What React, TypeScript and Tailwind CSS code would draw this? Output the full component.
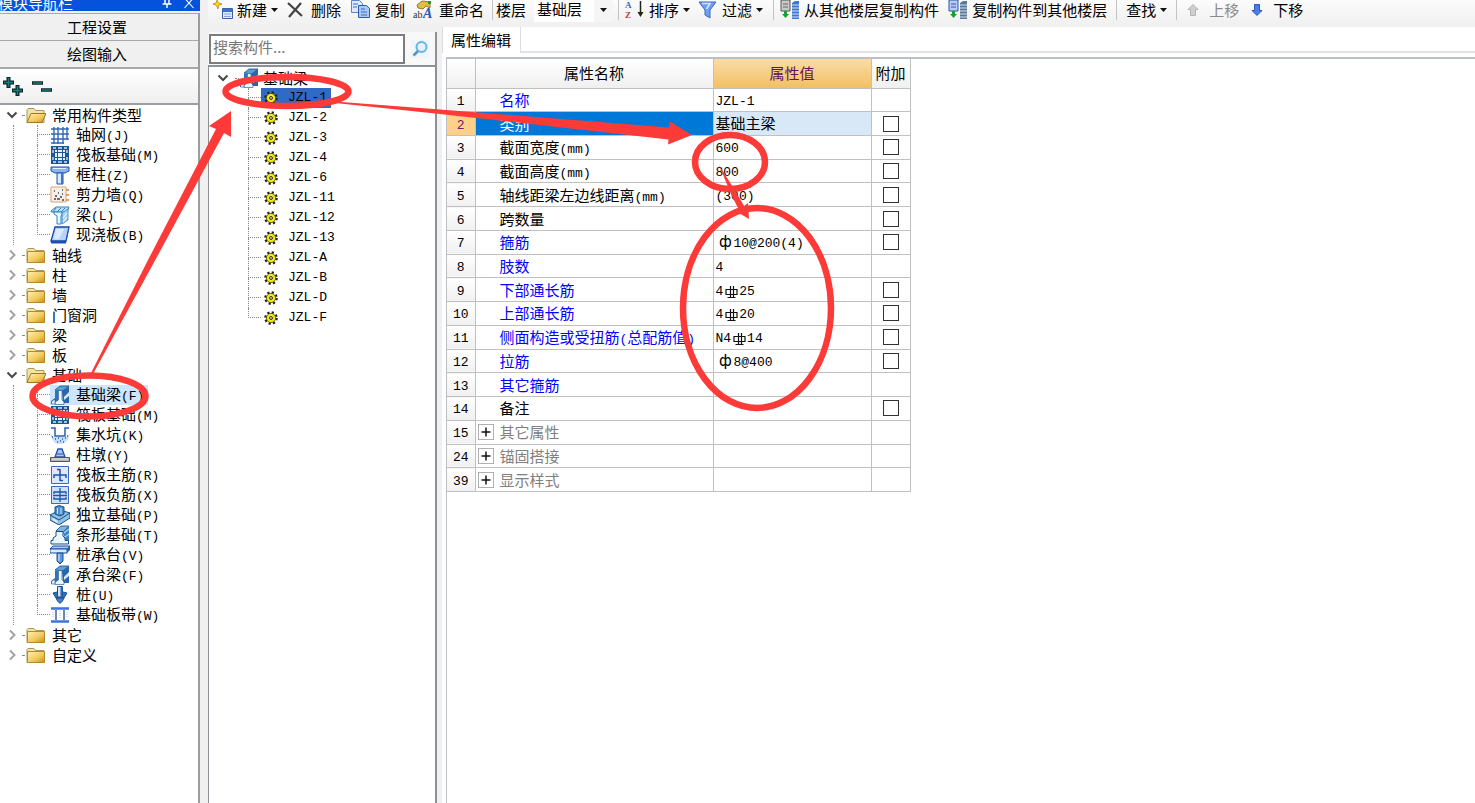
import React, { useState } from 'react';
import clsx from 'clsx';

type IconName =
  | 'axis' | 'raft' | 'column' | 'wall' | 'beam' | 'slab' | 'ftbeam' | 'pit' | 'pier' | 'mainbar'
  | 'negbar' | 'pad' | 'strip' | 'pilecap' | 'pile' | 'band';

const icons: Record<IconName, React.ReactNode> = {
  axis: <path d="M4 2v17M8 2v17M13 2v17M17 2v13M1 4h18M1 9h18M1 14h18M1 18h13" stroke="#3566b8" strokeWidth="1.4" fill="none" />,
  raft: (
    <>
      <path d="M1 1h18v18H1z" fill="#1c5592" />
      <path d="M3 3h3M8 3h4M14 3h3M3 17h3M8 17h4M14 17h3M3 5v3M3 12v3M17 5v3M17 12v3" stroke="#cfe6f8" strokeWidth="1.4" />
      <path d="M5 5h10v10H5z" fill="#e4f2fc" />
      <path d="M7.500 5v10M12.500 5v10M5 7.500h10M5 12.500h10" stroke="#1c5592" strokeWidth="1" />
    </>
  ),
  column: (
    <>
      <path d="M1 2h18v4l-4 2H5L1 6z" fill="#8db4ee" stroke="#1d4fae" />
      <path d="M7 8h6v11H7z" fill="#dbe8fb" stroke="#1d4fae" />
      <path d="M11 8h2v11h-2z" fill="#3f72cc" />
      <path d="M3 3.5h13" stroke="#e6f0fd" />
    </>
  ),
  wall: (
    <>
      <path d="M1 2h15v15H1z" fill="#f5efea" stroke="#e0a070" />
      <path d="M16 5h3M16 10h3M16 15h3" stroke="#e07c3a" strokeWidth="1.5" />
      <path d="M4 6h1M8 8h1M12 5h1M5 11h2M10 12h2M7 14h3M12 15h2M4 14h2M12 9h1" stroke="#444" strokeWidth="1.4" />
    </>
  ),
  beam: (
    <>
      <path d="M1 6l5-4h13l-2 5H1z" fill="#bfe0f7" stroke="#2b84c6" />
      <path d="M3 7l3-4M7 7l4-4M11 7l4-4" stroke="#2b84c6" />
      <path d="M4 7h8v3l-1 1v8H7v-8L4 9z" fill="#e6f4fd" stroke="#2b84c6" />
      <path d="M12 8l6-4v11l-6 4z" fill="#a5d3f0" stroke="#2b84c6" strokeWidth="0.8" />
      <path d="M13 13l4-5M13 17l4-5" stroke="#fff" />
    </>
  ),
  slab: (
    <>
      <path d="M5 2h14l-3 14H1z" fill="#b7d4f8" stroke="#1346ab" strokeWidth="1.3" />
      <path d="M1 16h15v2.500H1z" fill="#1e4fae" />
      <path d="M16 18l3-14v-2l-3 14z" fill="#2e66cc" />
      <path d="M6 4h8l-5 10H4z" fill="#dcebfd" />
    </>
  ),
  ftbeam: (
    <>
      <path d="M5 5l5-4h9l-6 5z" fill="#5f9fd8" stroke="#164f8c" strokeWidth="0.8" />
      <path d="M12 6l7-5v6l-5 5 5-2v8h-6z" fill="#2a66a8" />
      <path d="M14 12l5-4v3l-5 4z" fill="#d5eafa" />
      <path d="M5 5.500h3.500V19H1v-3l4-3z" fill="#2f74ba" />
      <path d="M8.500 5.500H12V15l2 2v2.500H5V17l3.500-2z" fill="#eef6fd" stroke="#164f8c" strokeWidth="0.6" />
      <path d="M1.500 16.500L5 14v5H1.500z" fill="#e8f2fb" stroke="#164f8c" strokeWidth="0.6" />
    </>
  ),
  pit: (
    <>
      <path d="M0 9c3 9 6 10 10 10s8-2 10-10l-4 3H4z" fill="#c4def6" />
      <path d="M1 3h4v8h10V3h4" fill="none" stroke="#2c5eb2" strokeWidth="1.5" />
      <path d="M2 12h1M5 14h1M8 13h1M12 14h1M15 13h1M17 11h1M7 17h1M10 16h1M13 17h1" stroke="#2c5eb2" strokeWidth="1.3" />
    </>
  ),
  pier: (
    <>
      <path d="M8 4h4l3 8H5z" fill="#a9c6f4" stroke="#2454ae" strokeWidth="1.4" />
      <path d="M7 9h6" stroke="#2454ae" />
      <path d="M0.500 12.500h19v4h-19z" fill="#b5b5b5" stroke="#555" />
      <path d="M2 14h16" stroke="#e8e8e8" />
    </>
  ),
  mainbar: (
    <>
      <path d="M1.500 1.500h17v17h-17z" fill="#dce8fc" stroke="#3c68bd" />
      <path d="M10 4v12M4 13v-3h12v3M7 4.500h3M10 15.500h3" stroke="#1b54a8" strokeWidth="1.5" fill="none" />
    </>
  ),
  negbar: (
    <>
      <path d="M1.500 1.500h17v17h-17z" fill="#cfe0fb" stroke="#3c68bd" />
      <path d="M10 3v14M4 9V7h12v2M4 12v2h12v-2M3 10.500h14" stroke="#1b54a8" strokeWidth="1.3" fill="none" />
    </>
  ),
  pad: (
    <>
      <path d="M0 10l10-5 10 3v5l-11 7-9-5z" fill="#8fc0e6" stroke="#174f88" />
      <path d="M0 10l9 5 11-7" fill="none" stroke="#174f88" />
      <path d="M5 2l4-1.500 5 1.500v7l-4 2-5-2z" fill="#4b8dc8" stroke="#174f88" />
      <path d="M7.500 3v6M11 3v6" stroke="#d5eafa" />
      <path d="M2.500 13l5 3v2l-5-3z" fill="#e8f4fd" />
    </>
  ),
  strip: (
    <>
      <path d="M6 6l5-5h8l-6 6z" fill="#7fb4e2" stroke="#174f88" strokeWidth="0.8" />
      <path d="M13 7l6-6v14l-3 2z" fill="#3c80c4" />
      <path d="M14 8l5-4M15 12l4-3" stroke="#a8d0f0" strokeWidth="1.400" />
      <path d="M6 6.500h7V11l2 2v2.500h3.500v3.500H1v-3.500h2V13l3-2z" fill="#eaf4fc" stroke="#174f88" />
    </>
  ),
  pilecap: (
    <>
      <path d="M0 4l3-3h17l-3 3z" fill="#a5cdf0" stroke="#174f98" />
      <path d="M0 4h17v4H0z" fill="#dcecfb" stroke="#174f98" />
      <path d="M17 4l3-3v4l-3 3z" fill="#2b63b0" />
      <path d="M7 8h6v8l-3 3-3-3z" fill="#5d97da" stroke="#174f98" />
      <path d="M9 9v7" stroke="#e0effc" />
    </>
  ),
  pile: (
    <>
      <path d="M3 8l4-1h6l4 1-3 5H6z" fill="#2f72bc" stroke="#1b4f92" />
      <path d="M7.500 1.500h5V12h-5z" fill="#cfe2f7" stroke="#1b4f92" />
      <path d="M10.500 2h2v10h-2z" fill="#2d68ae" />
      <path d="M6 13h8l-1.500 3L10 18.500 7.500 16z" fill="#3e82c8" stroke="#1b4f92" />
    </>
  ),
  band: (
    <>
      <path d="M1 3.500h18M1 16.500h18" stroke="#3b74de" strokeWidth="2.400" />
      <path d="M6 5v10M14 5v10" stroke="#26457e" strokeWidth="1.3" />
      <path d="M3 7v6M10 6v8M17 7v6" stroke="#9bbcec" strokeDasharray="1 1" />
    </>
  ),
};

const Icon = ({ name }: { name: IconName }) => (
  <svg viewBox="0 0 20 20" className="size-5 shrink-0">{icons[name]}</svg>
);

const Folder = ({ open }: { open?: boolean }) => (
  <svg viewBox="0 0 20 20" className="size-5 shrink-0">
    <defs>
      <linearGradient id="gold" x1="0" y1="0" x2="1" y2="1">
        <stop offset="0" stopColor="#fff2b0" />
        <stop offset="0.6" stopColor="#f0c75a" />
        <stop offset="1" stopColor="#d08a10" />
      </linearGradient>
    </defs>
    <path d="M1 4.500L2 3.500h6l1.500 2H18v12H1z" fill="#efe3a8" stroke="#a89a5a" />
    {open ? (
      <path d="M5 8.500h15L16 17.500H1z" fill="url(#gold)" stroke="#a3781c" />
    ) : (
      <path d="M1.500 6.500H18.500v11H1.500z" fill="url(#gold)" stroke="#b58a2a" />
    )}
  </svg>
);

const Chevron = ({ open }: { open?: boolean }) => (
  <svg viewBox="0 0 12 12" className="size-3 shrink-0">
    {open ? (
      <path d="M1.500 3.500L6 8l4.500-4.500" fill="none" stroke="#484848" strokeWidth="2" />
    ) : (
      <path d="M4 1.500L8.500 6 4 10.500" fill="none" stroke="#a3a3a3" strokeWidth="2" />
    )}
  </svg>
);

const Gear = () => (
  <svg viewBox="0 0 14 14" className="size-[14px] shrink-0">
    <circle cx="7" cy="7" r="5.600" fill="none" stroke="#222" strokeWidth="2.400" strokeDasharray="2.200 2.200" />
    <circle cx="7" cy="7" r="4.600" fill="#f4ea14" stroke="#444408" strokeWidth="0.8" />
    <circle cx="7" cy="7" r="1.500" fill="#c8c8d8" stroke="#222" strokeWidth="0.9" />
  </svg>
);

const Caret = () => (
  <svg viewBox="0 0 7 4" className="h-1 w-[7px] shrink-0"><path d="M0 0h7L3.500 4z" fill="#111" /></svg>
);

// dotted elbow in front of a leaf
const Elbow = ({ last }: { last?: boolean }) => (
  <span className="flex h-5 w-[13px] shrink-0 flex-col">
    <span className="h-[10px] border-b border-l border-dotted border-[#888]" />
    <span className={clsx('h-[10px]', !last && 'border-l border-dotted border-[#888]')} />
  </span>
);

interface Leaf {
  label: string;
  hotkey: string;
  icon: IconName;
}

interface Group {
  label: string;
  items?: Leaf[];
}

const groups: Group[] = [
  {
    label: '常用构件类型',
    items: [
      { label: '轴网', hotkey: '(J)', icon: 'axis' },
      { label: '筏板基础', hotkey: '(M)', icon: 'raft' },
      { label: '框柱', hotkey: '(Z)', icon: 'column' },
      { label: '剪力墙', hotkey: '(Q)', icon: 'wall' },
      { label: '梁', hotkey: '(L)', icon: 'beam' },
      { label: '现浇板', hotkey: '(B)', icon: 'slab' },
    ],
  },
  { label: '轴线' },
  { label: '柱' },
  { label: '墙' },
  { label: '门窗洞' },
  { label: '梁' },
  { label: '板' },
  {
    label: '基础',
    items: [
      { label: '基础梁', hotkey: '(F)', icon: 'ftbeam' },
      { label: '筏板基础', hotkey: '(M)', icon: 'raft' },
      { label: '集水坑', hotkey: '(K)', icon: 'pit' },
      { label: '柱墩', hotkey: '(Y)', icon: 'pier' },
      { label: '筏板主筋', hotkey: '(R)', icon: 'mainbar' },
      { label: '筏板负筋', hotkey: '(X)', icon: 'negbar' },
      { label: '独立基础', hotkey: '(P)', icon: 'pad' },
      { label: '条形基础', hotkey: '(T)', icon: 'strip' },
      { label: '桩承台', hotkey: '(V)', icon: 'pilecap' },
      { label: '承台梁', hotkey: '(F)', icon: 'ftbeam' },
      { label: '桩', hotkey: '(U)', icon: 'pile' },
      { label: '基础板带', hotkey: '(W)', icon: 'band' },
    ],
  },
  { label: '其它' },
  { label: '自定义' },
];

const members = ['JZL-1', 'JZL-2', 'JZL-3', 'JZL-4', 'JZL-6', 'JZL-11', 'JZL-12', 'JZL-13', 'JZL-A', 'JZL-B', 'JZL-D', 'JZL-F'];

interface Prop {
  no: number;
  name: string;
  unit?: React.ReactNode;
  value?: React.ReactNode;
  tone?: 'blue' | 'gray';
  box?: boolean;
}

const Phi = () => <span className="inline-block w-[18px] pl-0.5 text-center font-['DejaVu_Sans',sans-serif] text-[15px] leading-none">ф</span>;

// grade III rebar mark: two stems over a foot bar
const Rebar = () => (
  <svg viewBox="0 0 16 14" role="img" aria-label="HRB400" className="inline-block h-[14px] w-4 align-text-bottom">
    <path d="M3 4.500h11v5H3zM7.500 1v12M10.500 1v12M4.500 12.500h8" fill="none" stroke="#111" strokeWidth="1.2" />
  </svg>
);

const props: Prop[] = [
  { no: 1, name: '名称', value: 'JZL-1', tone: 'blue' },
  { no: 2, name: '类别', value: <span className="text-[15px]">基础主梁</span>, box: true },
  { no: 3, name: '截面宽度', unit: '(mm)', value: '600', box: true },
  { no: 4, name: '截面高度', unit: '(mm)', value: '800', box: true },
  { no: 5, name: '轴线距梁左边线距离', unit: '(mm)', value: '(300)', box: true },
  { no: 6, name: '跨数量', box: true },
  { no: 7, name: '箍筋', value: <><Phi />10@200(4)</>, tone: 'blue', box: true },
  { no: 8, name: '肢数', value: '4', tone: 'blue' },
  { no: 9, name: '下部通长筋', value: <>4<Rebar />25</>, tone: 'blue', box: true },
  { no: 10, name: '上部通长筋', value: <>4<Rebar />20</>, tone: 'blue', box: true },
  { no: 11, name: '侧面构造或受扭筋', unit: <>(<span className="text-[15px]">总配筋值</span>)</>, value: <>N4<Rebar />14</>, tone: 'blue', box: true },
  { no: 12, name: '拉筋', value: <><Phi />8@400</>, tone: 'blue', box: true },
  { no: 13, name: '其它箍筋', tone: 'blue' },
  { no: 14, name: '备注', box: true },
  { no: 15, name: '其它属性', tone: 'gray' },
  { no: 24, name: '锚固搭接', tone: 'gray' },
  { no: 39, name: '显示样式', tone: 'gray' },
];

const Mono = ({ children }: { children: React.ReactNode }) => (
  <span className="font-['Liberation_Mono','Noto_Sans_CJK_SC',monospace] text-[13px]">{children}</span>
);

const NavPanel = () => (
  <aside className="flex w-[200px] shrink-0 flex-col">
    <div className="flex h-[11px] items-end overflow-hidden bg-[#0553dd] text-white">
      <h1 className="-ml-0.5 h-4 flex-1 leading-4">模块导航栏</h1>
      <button aria-label="固定" className="mr-3 h-[11px]">
        <svg viewBox="0 0 10 11" className="h-[11px] w-[10px]"><path d="M3 0v4M7 0v4M0.500 4h9M5 4v4" stroke="#fff" strokeWidth="1.500" /></svg>
      </button>
      <button aria-label="关闭" className="mr-1.5 h-[11px]">
        <svg viewBox="0 0 10 11" className="h-[11px] w-[10px]"><path d="M0.500 -2l9 10M9.500 -2l-9 10" stroke="#fff" strokeWidth="1.100" /></svg>
      </button>
    </div>
    <div className="mt-0.5 flex flex-1 flex-col border-r-2 border-[#9a9da2]">
      <button className="h-7 border-b border-t border-[#a8a8a8] bg-[#f0f0f0] pr-1">工程设置</button>
      <button className="h-7 border-b-2 border-[#a8a8a8] bg-[#f0f0f0] pr-1">绘图输入</button>
      <div className="flex h-[34px] items-center gap-2 bg-gradient-to-b from-white to-[#efefef] pl-0.5">
        <button aria-label="全部展开">
          <svg viewBox="0 0 22 20" className="h-5 w-[22px]">
            <path d="M6.500 1v11M1 6.500h11M15.500 9v11M10 14.500h11" stroke="#0b2525" strokeWidth="4" />
            <path d="M6.500 2v9M2 6.500h9M15.500 10v9M11 14.500h9" stroke="#128080" strokeWidth="1.600" />
          </svg>
        </button>
        <button aria-label="全部折叠">
          <svg viewBox="0 0 20 20" className="size-5">
            <path d="M0 7h11M9 14h11" stroke="#0b2525" strokeWidth="3.600" />
            <path d="M1 7h9M10 14h9" stroke="#128080" strokeWidth="1.500" />
          </svg>
        </button>
      </div>
      <ul className="flex-1 border-t-2 border-[#9a9da2] bg-white">
        {groups.map((g) => (
          <li key={g.label}>
            <button className="flex h-5 w-full items-center">
              <span className="ml-1.5 flex"><Chevron open={!!g.items} /></span>
              <span className="ml-1 mr-0.5 w-0.5 border-b border-dotted border-[#888]" />
              <Folder open={!!g.items} />
              <span className="pl-1.5 leading-5">{g.label}</span>
            </button>
            {g.items && (
              <ul className="ml-[13px] border-l border-dotted border-[#888]">
                {g.items.map((it, i) => (
                  <li key={it.label} className="flex h-5 items-center pl-[23px]">
                    <Elbow last={i === g.items!.length - 1} />
                    <button
                      className={clsx(
                        'flex h-5 items-center whitespace-nowrap',
                        g.label === '基础' && i === 0 && 'bg-[#cce6ff]',
                      )}
                    >
                      <Icon name={it.icon} />
                      <span className="pl-1.5 pr-1 leading-5">{it.label}<Mono>{it.hotkey}</Mono></span>
                    </button>
                  </li>
                ))}
              </ul>
            )}
          </li>
        ))}
      </ul>
    </div>
  </aside>
);

const Divider = () => <span className="h-5 w-px shrink-0 bg-[#c4c4c4]" />;

const CopyFloor = ({ tone }: { tone: 'gray' | 'blue' }) => (
  <svg viewBox="0 0 21 20" className="h-5 w-[21px] shrink-0">
    <path d="M2 0h9v11H2z" fill={tone === 'gray' ? '#c9c9c9' : '#b5cdf5'} stroke={tone === 'gray' ? '#555' : '#2c55a8'} />
    <path d="M4 4h5M4 7h5" stroke={tone === 'gray' ? '#666' : '#2c55a8'} />
    <path d="M5 11h3v3h2l-3.500 4L3 14h2z" fill="#18a038" />
    <path d="M13 3l3-2h4v18h-7z" fill={tone === 'gray' ? '#3f77d0' : '#5c7894'} />
    <path d="M13 5h7M13 8h7M13 11h7M13 14h7M13 17h7" stroke="#d3e2f8" />
  </svg>
);

const Toolbar = () => (
  <div className="flex h-[27px] items-start overflow-hidden whitespace-nowrap bg-gradient-to-b from-[#fcfcfc] to-[#efefef]">
    <div className="flex h-5 items-center pl-[5px] leading-5">
      <button className="flex items-center gap-1">
        <svg viewBox="0 0 20 20" className="size-5">
          <path d="M4 0l1.500 3L9 4 5.500 5.500 5 9 3.500 5.500 0 4l3-1z" fill="#ffd51e" stroke="#c48a00" strokeWidth="0.8" />
          <path d="M9.500 8.500h10v10h-10z" fill="#dfeafa" stroke="#3d62a4" />
          <path d="M10 9h9v3h-9z" fill="#3d73c9" />
          <path d="M11 14h7M11 16.500h7" stroke="#8aa6d4" />
        </svg>
        新建<Caret />
      </button>
      <button className="ml-[9px] flex items-center gap-2">
        <svg viewBox="0 0 16 16" className="size-4"><path d="M1 1l14 13M14 1L2 15" stroke="#444" strokeWidth="2.200" /></svg>
        删除
      </button>
      <button className="ml-[9px] flex items-center gap-1">
        <svg viewBox="0 0 21 20" className="h-5 w-[21px]">
          <path d="M1.500 0.500h8l3 3v9h-11z" fill="#dce9fb" stroke="#5b86cc" />
          <path d="M8.500 5.500h8l3 3v9h-11z" fill="#a9c8f4" stroke="#2d5bb0" />
          <path d="M3 4h5M3 7h4M11 9h4M11 12h6M11 15h6" stroke="#3e6cbf" />
        </svg>
        复制
      </button>
      <button className="ml-2 flex items-center gap-1.5">
        <svg viewBox="0 0 20 20" className="size-5 overflow-visible">
          <path d="M4 5l5-4 8 1v6l-4-2-3 3-5-1z" fill="#e2bd45" stroke="#7d6218" strokeWidth="0.8" />
          <path d="M15 1h3v3h-3z" fill="#3e8a3a" />
          <text x="0" y="18" fontSize="10" fontFamily="Liberation Serif, serif" fill="#333">ab</text>
          <text x="10" y="18" fontSize="14" fontStyle="italic" fontWeight="700" fontFamily="Liberation Serif, serif" fill="#2858b8">A</text>
        </svg>
        重命名
      </button>
      <span className="ml-2 mr-[3px] flex"><Divider /></span>
      <label htmlFor="floor">楼层</label>
      <div className="ml-2 flex h-[23px] w-[79px] items-center bg-white">
        <select id="floor" className="w-[60px] appearance-none bg-transparent pb-0.5 pl-[3px] outline-none">
          <option>基础层</option>
        </select>
        <span className="flex h-full flex-1 items-center justify-center bg-[#f5f5f5]"><Caret /></span>
      </div>
      <span className="ml-[5px] mr-1.5 flex"><Divider /></span>
      <button className="flex items-center gap-1">
        <svg viewBox="0 0 20 20" className="size-5 overflow-visible">
          <text x="0" y="8" fontSize="9" fontWeight="700" fontFamily="Liberation Serif, serif" fill="#3e66b0">A</text>
          <text x="0" y="18" fontSize="9" fontWeight="700" fontFamily="Liberation Serif, serif" fill="#b04040">Z</text>
          <path d="M15.500 1v13" stroke="#222" strokeWidth="1.500" />
          <path d="M12.500 12h6l-3 5z" fill="#222" />
        </svg>
        排序<Caret />
      </button>
      <button className="ml-2 flex items-center gap-1">
        <svg viewBox="0 0 20 18" className="h-[18px] w-5">
          <path d="M1 1h17l-6 8v8l-5-3V9z" fill="#6f9ff0" stroke="#3767c4" />
          <path d="M4 2.500h8L8.500 8" fill="none" stroke="#d5e4fd" strokeWidth="1.500" />
        </svg>
        过滤<Caret />
      </button>
      <span className="ml-2.5 mr-[5px] flex"><Divider /></span>
      <button className="flex items-center gap-1"><CopyFloor tone="gray" />从其他楼层复制构件</button>
      <button className="ml-2 flex items-center gap-1"><CopyFloor tone="blue" />复制构件到其他楼层</button>
      <span className="ml-[9px] mr-[9px] flex"><Divider /></span>
      <button className="flex items-center gap-1">查找<Caret /></button>
      <span className="ml-[9px] mr-2.5 flex"><Divider /></span>
      <button disabled className="flex items-center gap-2.5 text-[#8a8a8a]">
        <svg viewBox="0 0 12 12" className="size-3"><path d="M6 0.500l5 5H8.500v6h-5v-6H1z" fill="#cfcfcf" stroke="#b4b4b4" /></svg>
        上移
      </button>
      <button className="ml-3 flex items-center gap-2.5">
        <svg viewBox="0 0 12 12" className="size-3"><path d="M6 11.500l5-5H8.500v-6h-5v6H1z" fill="#4b7fe8" stroke="#2d57b8" /></svg>
        下移
      </button>
    </div>
  </div>
);

const MemberPanel = () => {
  const [selected, setSelected] = useState('JZL-1');

  return (
    <section className="mt-[5px] flex w-[229px] shrink-0 flex-col border-r-2 border-[#8d9196] bg-white">
      <div className="flex h-[33px] items-center bg-[#f8f8f8]">
        <input
          type="text"
          aria-label="搜索构件"
          placeholder="搜索构件..."
          className="ml-px h-[30px] w-[196px] border-2 border-[#7c7c7c] bg-white px-0.5 pb-1 outline-none placeholder:text-[#777]"
        />
        <button aria-label="搜索" className="ml-1.5 bg-[#eef6fc]">
          <svg viewBox="0 0 18 18" className="size-[18px]">
            <circle cx="10.500" cy="7" r="5" fill="#e3f3fd" stroke="#66b3e4" strokeWidth="2" />
            <path d="M7 11l-4.500 4.500" stroke="#5a92c0" strokeWidth="2.600" />
          </svg>
        </button>
      </div>
      <div className="flex-1 border-l border-t-2 border-[#8d9196] pt-px">
        <div className="flex h-5 items-center">
          <span className="ml-2 flex"><Chevron open /></span>
          <span className="ml-1.5 w-1 border-b border-dotted border-[#888]" />
          <Icon name="ftbeam" />
          <span className="pl-1">基础梁</span>
        </div>
        <ul className="pl-[39px]">
          {members.map((m, i) => (
            <li key={m} className="flex h-5 items-center">
              <Elbow last={i === members.length - 1} />
              <button
                onClick={() => setSelected(m)}
                className={clsx('flex h-5 items-center gap-2.5 pl-[3px] pr-1', m === selected && 'bg-[#316ac5]')}
              >
                <Gear />
                <Mono>{m}</Mono>
              </button>
            </li>
          ))}
        </ul>
      </div>
    </section>
  );
};

const PropertyTable = () => (
  <table className="h-[433px] w-[463px] table-fixed border-collapse text-left">
    <colgroup>
      <col className="w-7" />
      <col className="w-[238px]" />
      <col className="w-[158px]" />
      <col className="w-[39px]" />
    </colgroup>
    <thead>
      <tr className="h-[29px] bg-gradient-to-b from-white to-[#f0f0f0] text-center">
        <th className="border-b border-r border-[#c0c0c0]" />
        <th className="border-b border-r border-[#c0c0c0] p-0 text-center font-normal">属性名称</th>
        <th className="border-b border-r border-[#c0c0c0] bg-gradient-to-b from-[#f9dca6] to-[#f1bf60] p-0 text-center font-normal text-[#66105e]">属性值</th>
        <th className="border-b border-r border-[#c0c0c0] p-0 text-center font-normal">附加</th>
      </tr>
    </thead>
    <tbody className="leading-5">
      {props.map((p) => {
        const active = p.no === 2;
        return (
          <tr key={p.no}>
            <td
              className={clsx(
                'border-b border-r border-[#c0c0c0] p-0 text-center',
                active ? 'bg-[#ffd08a] text-[#702068]' : 'bg-gradient-to-b from-white to-[#f0f0f0]',
              )}
            >
              <div className="h-5 text-[13px]"><Mono>{p.no}</Mono></div>
            </td>
            <td
              className={clsx(
                'border-b border-r border-[#c0c0c0] p-0',
                active && 'bg-[#0078d7] text-white',
                p.tone === 'blue' && 'text-[#0000ff]',
                p.tone === 'gray' && 'text-[#808080]',
              )}
            >
              <div className="flex h-5 items-center whitespace-nowrap">
                <span className="flex w-6 shrink-0 pl-0.5">
                  {p.tone === 'gray' && (
                    <button aria-label={'展开' + p.name} className="flex size-4 items-center justify-center border border-[#b0b0b0]">
                      <svg viewBox="0 0 10 10" className="size-[10px]"><path d="M5 0.500v9M0.500 5h9" stroke="#111" strokeWidth="1.500" /></svg>
                    </button>
                  )}
                </span>
                <span className="h-5">{p.name}{p.unit && <Mono>{p.unit}</Mono>}</span>
              </div>
            </td>
            <td className={clsx('border-b border-r border-[#c0c0c0] p-0 pl-0.5', active && 'bg-[#d8e8f7]')}>
              <div className="h-5 whitespace-nowrap text-[13px]"><Mono>{p.value}</Mono></div>
            </td>
            <td className="border-b border-r border-[#c0c0c0] p-0">
              {p.box && (
                <input
                  type="checkbox"
                  aria-label={p.name + '附加'}
                  className="mx-auto block size-4 appearance-none border border-[#333] bg-white checked:bg-[#333]"
                />
              )}
            </td>
          </tr>
        );
      })}
    </tbody>
  </table>
);

// hand-drawn red marks laid over the window
const Marks = () => (
  <svg viewBox="0 0 900 420" className="pointer-events-none absolute left-0 top-0 h-[420px] w-[900px]">
    <g fill="none" stroke="#fc3a37" strokeWidth="6.500">
      <ellipse cx="89" cy="396" rx="56.500" ry="20.500" />
      <ellipse cx="287" cy="91.500" rx="61.500" ry="14.500" />
      <ellipse cx="730" cy="162" rx="35" ry="27" />
      <ellipse cx="757" cy="308" rx="74" ry="100" />
    </g>
    <g fill="#fc3a37">
      <path d="M91 373L148 260 216 129 209 126 231 111V137L224 133 158 255 93 374z" />
      <path d="M335 101.500L440 109.500 669 127.500 670 121.500 692 135 668 144.500 668.500 139.500 440 114 335 103z" />
      <path d="M719 165L736 192 744 206 748 203 749 219 734 210 738 208 731 194z" />
    </g>
  </svg>
);

const App = () => {
  return (
    <div className="relative flex h-screen overflow-hidden bg-[#f0f0f0] font-['Noto_Sans_CJK_SC',sans-serif] text-[15px] text-black">
      <NavPanel />
      <div className="ml-2 flex min-w-0 flex-1 flex-col">
        <Toolbar />
        <div className="flex min-h-0 flex-1">
          <MemberPanel />
          <main className="ml-[5px] flex min-w-0 flex-1 flex-col bg-white">
            <div className="flex h-[26px]">
              <h2 className="h-full w-[79px] border-l border-r border-[#dcdcdc] pl-2 leading-[26px]">属性编辑</h2>
              <div className="flex-1 border-b-2 border-[#e2e2e2]" />
            </div>
            <div className="ml-1 mt-1 flex-1 border-l border-t-2 border-[#bcbfc4]">
              <PropertyTable />
            </div>
          </main>
        </div>
      </div>
      <Marks />
    </div>
  );
};

export default App;
